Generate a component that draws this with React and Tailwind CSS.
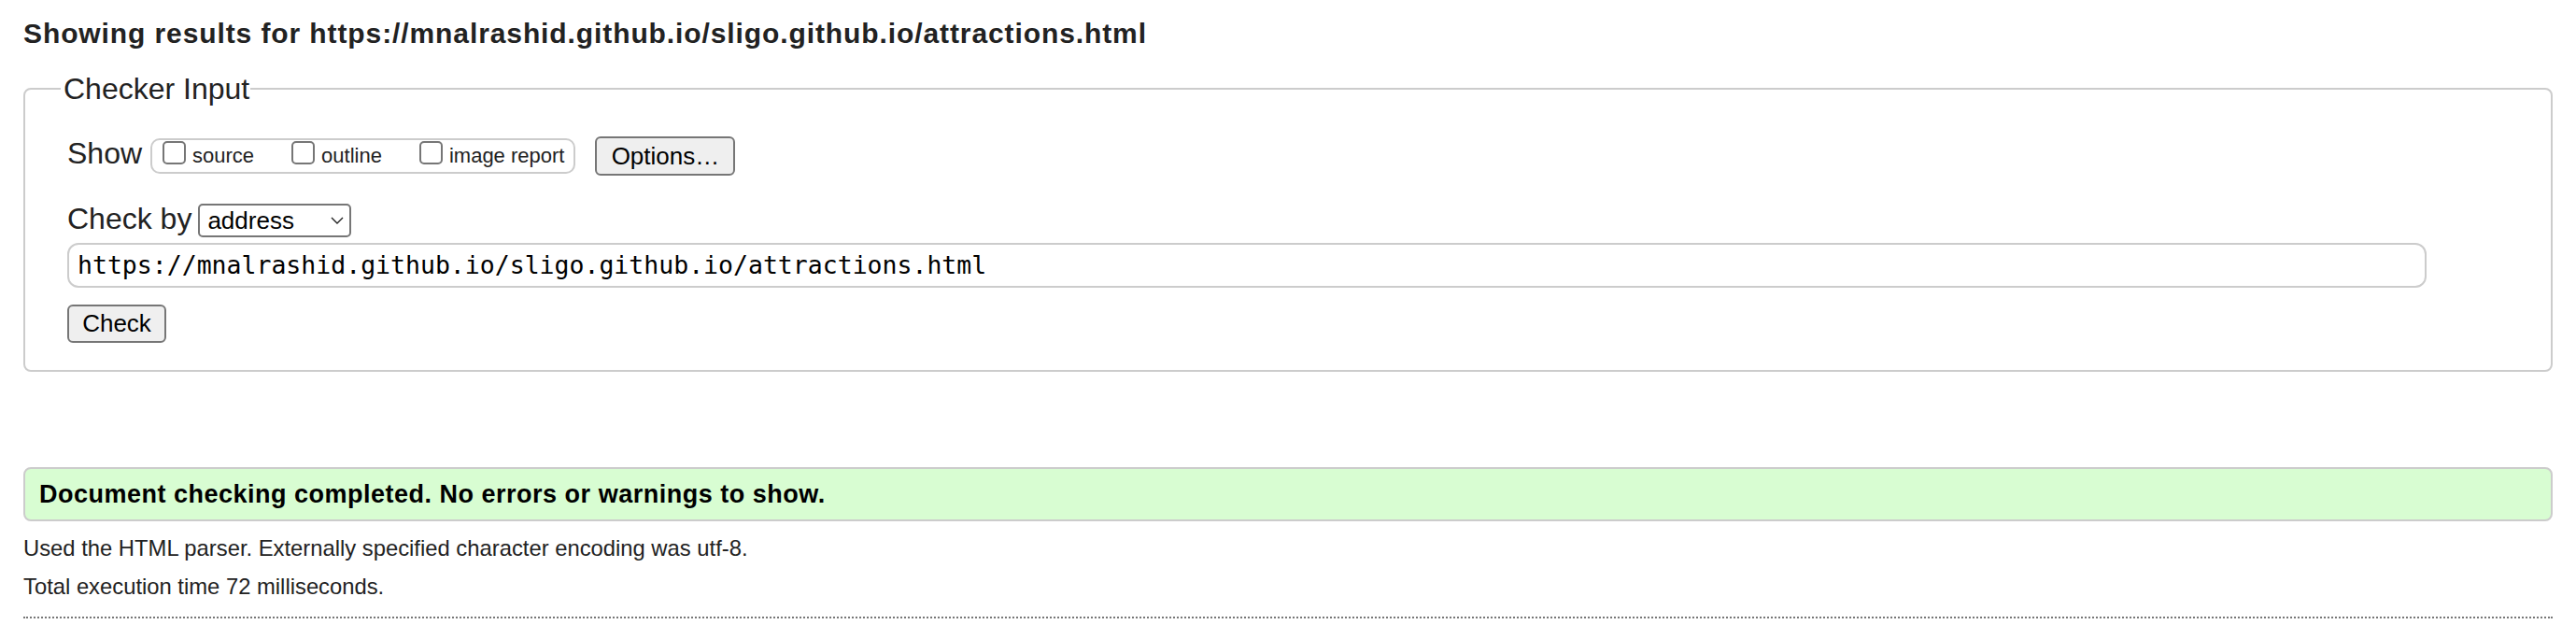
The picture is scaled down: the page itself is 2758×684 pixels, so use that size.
const Box = ({ label }) => (
  <label className="flex items-start">
    <span className="mt-[1px] h-[25px] w-[25px] rounded-[5px] border-2 border-[#767676] bg-white" />
    <span className="ml-[7px] mt-[5px] text-[22px] leading-[24px]">{label}</span>
  </label>
);

export default function App() {
  return (
    <div className="min-h-screen bg-white px-[25px] pt-[20px] font-['Liberation_Sans',Arial,sans-serif] text-[#222]">
      <h2 className="text-[30px] font-bold leading-[32px] tracking-[0.9px]">
        Showing results for https://mnalrashid.github.io/sligo.github.io/attractions.html
      </h2>

      <fieldset className="mt-[23px] rounded-[8px] border-2 border-[#ccc] pb-[29px] pl-[38px] pt-[31px]">
        <legend className="pl-[3px] pr-[1px] text-[32px] leading-[40px]">Checker Input</legend>

        <div className="ml-[7px]">
          <div className="flex h-[42px] items-center">
            <span className="mb-[5px] text-[32px] leading-[37px]">Show</span>
            <div className="ml-[9px] flex h-[38px] items-start gap-[40px] rounded-[10px] border-2 border-[#ccc] pl-[11px] pr-[10px]">
              <Box label="source" />
              <Box label="outline" />
              <Box label="image report" />
            </div>
            <button className="ml-[21px] flex h-[42px] w-[150px] items-center justify-center rounded-[6px] border-2 border-[#767676] bg-[#efefef] text-[26px] text-black">
              Options…
            </button>
          </div>

          <div className="mt-[30px] flex h-[36px] items-center">
            <span className="mb-[4px] text-[32px] leading-[37px]">Check by</span>
            <div className="ml-[7px] flex h-[36px] w-[164px] items-center rounded-[5px] border-2 border-[#767676] pl-[8px] text-[26px] text-black">
              address
              <svg className="ml-auto mr-[6px]" width="14" height="8" viewBox="0 0 14 8" fill="none">
                <path d="M1 1l6 6 6-6" stroke="#222" strokeWidth="1.4" />
              </svg>
            </div>
          </div>

          <div className="mt-[6px] flex h-[48px] w-[2526px] items-center rounded-[12px] border-2 border-[#ccc] pl-[9px] font-['DejaVu_Sans_Mono',monospace] text-[26.5px] text-black">
            https://mnalrashid.github.io/sligo.github.io/attractions.html
          </div>

          <button className="mt-[18px] flex h-[41px] w-[106px] items-center justify-center rounded-[6px] border-2 border-[#767676] bg-[#efefef] text-[26px] text-black">
            Check
          </button>
        </div>
      </fieldset>

      <div className="mt-[102px] flex h-[58px] items-center rounded-[8px] border-2 border-[#ccc] bg-[#d8fdd2] pl-[15px] text-[27px] font-bold tracking-[0.5px] text-black">
        Document checking completed. No errors or warnings to show.
      </div>

      <p className="mt-[16px] text-[23.8px] leading-[26px]">
        Used the HTML parser. Externally specified character encoding was utf-8.
      </p>
      <p className="mt-[15px] text-[23.8px] leading-[26px]">Total execution time 72 milliseconds.</p>

      <div className="mt-[19px] border-t-2 border-dotted border-[#777]" />
    </div>
  );
}
